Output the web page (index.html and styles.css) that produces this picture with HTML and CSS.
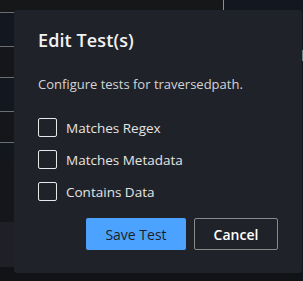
FILE: index.html
```html
<!DOCTYPE html>
<html>
<head>
<meta charset="utf-8">
<link rel="stylesheet" href="styles.css">
</head>
<body>
<div class="page">
  <div class="bg">
    <div class="topbar">
      <div class="tb-left"></div>
      <div class="tb-right"></div>
    </div>
    <div class="row blue r1"></div>
    <div class="row dark r2"></div>
    <div class="row blue r3"></div>
    <div class="row dark r4"></div>
    <div class="fade"></div>
    <div class="blank"></div>
    <div class="band"></div>
    <div class="foot"></div>
  </div>
  <div class="scroll"><div class="thumb"></div></div>
</div>

<div class="dialog" role="dialog">
  <h2 class="title">Edit Test(s)</h2>
  <p class="desc">Configure tests for traversedpath.</p>
  <div class="options">
    <label class="opt"><span class="box"></span><span>Matches Regex</span></label>
    <label class="opt"><span class="box"></span><span>Matches Metadata</span></label>
    <label class="opt"><span class="box"></span><span>Contains Data</span></label>
  </div>
  <div class="actions">
    <button class="btn primary">Save Test</button>
    <button class="btn secondary">Cancel</button>
  </div>
</div>
</body>
</html>
```
FILE: styles.css
```css
* { box-sizing: border-box; }
html, body { margin: 0; padding: 0; }
body {
  width: 303px;
  height: 281px;
  overflow: hidden;
  background: #131417;
  font-family: "Open Sans", "Noto Sans", sans-serif;
  position: relative;
}
.page { display: flex; height: 281px; }
.bg { flex: 1; display: flex; flex-direction: column; }
.topbar { display: flex; height: 13px; }
.tb-left { width: 224px; background: #161719; border-right: 1px solid #8a8d91; border-bottom: 1px solid #6b6e73; }
.tb-right { flex: 1; background: #121720; }
.row { border-bottom: 1px solid #6b6e73; }
.blue { background: #121720; }
.dark { background: #151619; }
.r1 { height: 34px; }
.r2 { height: 31px; }
.r3 { height: 34px; }
.r4 { height: 31px; }
.fade { height: 30px; background: linear-gradient(#121720, #151619); }
.blank { height: 49px; background: #151619; }
.band { height: 45px; background: #1e2025; }
.foot { flex: 1; background: #121316; }
.scroll { width: 1px; background: #121720; padding-top: 50px; }
.thumb { height: 11px; background: #6a8282; }

.dialog {
  position: absolute;
  left: 14px;
  top: 10px;
  width: 288px;
  height: 263px;
  background: #202229;
  border-radius: 3px;
  padding: 18px 24px 23px;
  color: #e6e6e6;
  display: flex;
  flex-direction: column;
}
.title {
  margin: 0;
  font-size: 18px;
  font-weight: 600;
  line-height: 24px;
  color: #f2f2f2;
  letter-spacing: 0.1px;
}
.desc {
  margin: 23px 0 0;
  font-size: 13px;
  line-height: 18px;
  color: #d4d4d6;
}
.options {
  margin-top: 25px;
  display: flex;
  flex-direction: column;
  gap: 13px;
}
.opt {
  display: flex;
  align-items: center;
  gap: 9px;
  font-size: 13.5px;
  color: #e4e4e4;
  height: 19px;
}
.box {
  width: 19px;
  height: 19px;
  border: 1px solid #e8e8e8;
  border-radius: 2px;
  flex: none;
}
.actions {
  margin-top: auto;
  display: flex;
  justify-content: flex-end;
  gap: 8px;
}
.btn {
  height: 32px;
  font-family: inherit;
  font-size: 14px;
  border-radius: 2px;
  padding: 0;
}
.primary {
  width: 100px;
  background: #4ba3ff;
  border: none;
  color: #1c1f26;
}
.secondary {
  width: 84px;
  background: transparent;
  border: 1px solid #8a8a8a;
  color: #ffffff;
  font-weight: 600;
}
```
